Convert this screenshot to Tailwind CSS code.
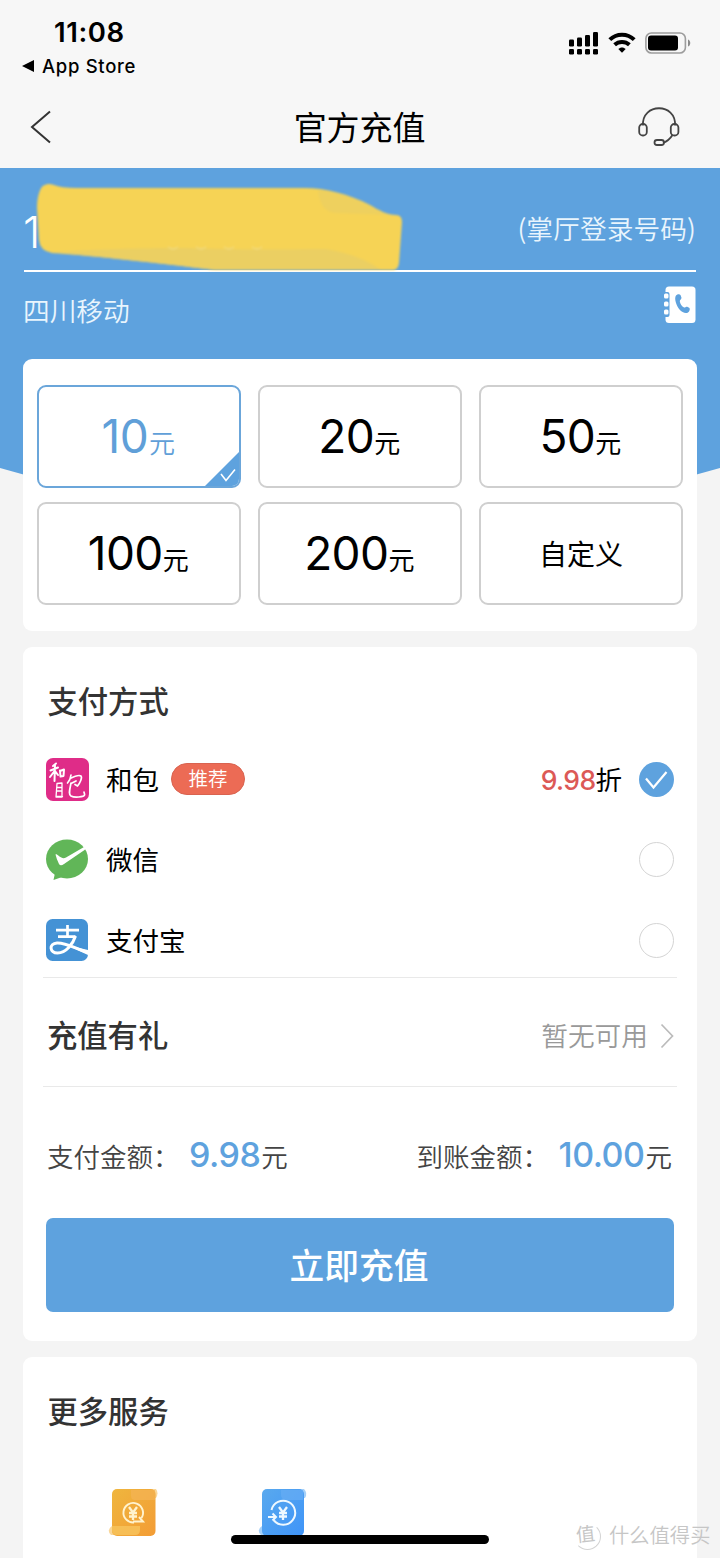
<!DOCTYPE html>
<html lang="zh-CN">
<head>
<meta charset="utf-8">
<title>官方充值</title>
<script src="https://cdn.jsdelivr.net/npm/@tailwindcss/browser@4"></script>
</head>
<body class="bg-[#f4f4f4]">
<div class="relative w-[720px] h-[1558px] overflow-hidden flex flex-col font-['Inter','Noto_Sans_CJK_SC',sans-serif] text-black">

  <!-- Status bar -->
  <header class="h-[168px] shrink-0 bg-[#f7f7f7] flex flex-col">
    <div class="h-[86px] flex justify-between pl-[22px] pr-[29px]">
      <div class="flex flex-col pt-[16px]">
        <div class="pl-[32px] h-8 leading-8 text-[27.500px] font-semibold tracking-[0.600px] whitespace-nowrap">11:08</div>
        <div class="mt-[6px] h-6 flex items-center gap-[8px] text-[18.500px] font-[450] tracking-[0.700px] leading-6 whitespace-nowrap">
          <svg class="w-3 h-3" viewBox="0 0 12 12"><path d="M0 6 12 0v12z"/></svg>
          <span>App Store</span>
        </div>
      </div>
      <div class="flex gap-[9px] pt-[32px]">
        <svg class="w-[30px] h-[23px]" viewBox="0 0 30 23">
          <rect x="0" y="7.500" width="5" height="7" rx="1.200"/><rect x="8" y="5.500" width="5" height="9" rx="1.200"/><rect x="16" y="3" width="5" height="11.500" rx="1.200"/><rect x="24" y="0" width="5" height="14.500" rx="1.200"/>
          <rect x="0" y="17" width="5" height="5.500" rx="1.200"/><rect x="8" y="17" width="5" height="5.500" rx="1.200"/><rect x="16" y="17" width="5" height="5.500" rx="1.200"/><rect x="24" y="17" width="5" height="5.500" rx="1.200"/>
        </svg>
        <svg class="w-[28px] h-[22px]" viewBox="0 0 28 22" fill="none" stroke="#000" stroke-width="4">
          <path d="M1.800 7.700C8.500 1 19.500 1 26.200 7.700"/><path d="M6.600 12.800C10.800 9 17.200 9 21.400 12.800"/><path d="M14 20.800l-3.700-3.700c2-2.100 5.400-2.100 7.400 0z" fill="#000" stroke="none"/>
        </svg>
        <svg class="w-[46px] h-[23px]" viewBox="0 0 46 23">
          <rect x="0.900" y="1" width="39.500" height="20" rx="5.500" fill="none" stroke="#9d9d9d" stroke-width="1.600"/>
          <rect x="3" y="3.500" width="30" height="15" rx="3"/>
          <path d="M43 7.500c3 1 3 6 0 7z" fill="#8a8a8a"/>
        </svg>
      </div>
    </div>
    <!-- Navigation -->
    <div class="h-[82px] flex items-center justify-between pl-[30px] pr-[40px]">
      <svg class="w-[22px] h-[34px]" viewBox="0 0 22 34" fill="none" stroke="#333" stroke-width="2"><path d="M20 1.500 2 17 20 32.500"/></svg>
      <h1 class="text-[33px] leading-[48px] tracking-[-0.100px] pl-[29px] pt-[2px]">官方充值</h1>
      <svg class="w-[42px] h-[42px]" viewBox="0 0 42 42" fill="none" stroke="#444" stroke-width="1.800">
        <path d="M5 19.500C3.500-3.500 38.500-3.500 37 19.500"/><rect x="1.200" y="18" width="7.600" height="11.500" rx="3.600"/><rect x="32.800" y="18" width="7.600" height="11.500" rx="3.600"/><path d="M34.500 29C32 33 29 35.500 25 37"/><rect x="16.500" y="34" width="9.500" height="5" rx="2.500"/>
      </svg>
    </div>
  </header>

  <main class="relative flex-1 px-[23px] flex flex-col">
    <div class="absolute inset-x-0 top-0 h-[324px] bg-[#5ea2de] [clip-path:polygon(0_0,100%_0,100%_300px,96.500%_307px,3.500%_307px,0_300px)]"></div>

    <!-- Phone number -->
    <section class="relative h-[191px] px-px flex flex-col shrink-0">
      <div class="h-[104px] border-b-[2.500px] border-white flex items-center justify-between pt-[19px]">
        <span class="text-[44px] leading-[60px] font-[350] text-white pt-[6px] -ml-px">1</span>
        <span class="text-[26.700px] leading-9 text-[#e9f5fd] font-['Noto_Sans_CJK_SC',sans-serif] font-[350] tracking-[0.100px] -mt-[2px]">(掌厅登录号码)</span>
      </div>
      <div class="flex justify-between h-[76px]">
        <span class="pt-[21px] text-[26.700px] leading-[36px] font-[350] text-[#e9f5fd] -ml-px">四川移动</span>
        <svg class="w-[33px] h-[38px] mt-[14px]" viewBox="0 0 33 38">
          <rect x="2.500" y="0.500" width="30" height="36.500" rx="3.500" fill="#fff"/>
          <path d="M0 6h4.500q2 0 2 2v21q0 2-2 2H0z" fill="#5ea2de"/>
          <rect x="1" y="7.500" width="4.500" height="5" rx="1.500" fill="#fff"/><rect x="1" y="15.500" width="4.500" height="5" rx="1.500" fill="#fff"/><rect x="1" y="23.500" width="4.500" height="5" rx="1.500" fill="#fff"/>
          <path d="M13 9.500c1.300-1.400 3.600-1.800 4.500-.5l1 2.800c.3 1.200-1.800 2.200-1.700 3.400.4 2.600 2 5 4.300 6.300 1 .4 2.200-1 3.500-.6l1.600.8c1.300 1 .4 3.700-1.200 4.700-2.500 1.500-6-.3-8.500-3-3-3.400-5.700-10.800-3.500-13.900z" fill="#5ea2de"/>
        </svg>
      </div>
      <svg class="absolute left-[13px] top-[15px] w-[368px] h-[87px] blur-[0.800px]" viewBox="0 0 368 87">
        <path d="M9 2C5 2 1 12 1 25L3 57Q4 68 16 70C60 73 120 80 180 87H355Q362 88 363 80L366 39Q366 32 360 32C352 32 342 27 334 22C312 11 290 5 268 5H40Q25 5 18 2Q12 0 9 2Z" fill="#f6d355"/>
        <path d="M16 69.500C60 66 100 65 150 65C200 67 250 66 290 66Q325 72 345 87L180 87C120 80 60 73 16 69.500Z" fill="#ebcf62"/>
        <path d="M282 7C305 10 322 16 340 27Q348 31 355 32L300 30Q284 29 282 7Z" fill="#eed05e"/>
        <path d="M132 64q5 4 10 0M160 64q5 4 10 0M188 64q5 4 10 0M216 64q5 4 10 0" fill="none" stroke="#f2df90" stroke-width="1"/>
      </svg>
    </section>

    <!-- Amounts -->
    <section class="relative h-[272px] shrink-0 bg-white rounded-[9px] px-[14px] pt-[26px]">
      <div class="grid grid-cols-3 gap-x-[17px] gap-y-[14px] text-[46px] tracking-[-0.600px] leading-[60px]">
        <div class="relative h-[103px] border-2 border-[#6ba6da] rounded-[9px] flex items-center justify-center text-[#609fd8] overflow-hidden">
          <div class="flex items-baseline pt-[7px] pr-[2px]"><span>10</span><span class="text-[26px] ml-px font-[350]">元</span></div>
          <svg class="absolute -right-px -bottom-px w-[36px] h-[36px]" viewBox="0 0 36 36"><path d="M36 0V36H0z" fill="#5ea2de"/><path d="M17 23l5 6.500 9-11" fill="none" stroke="#fff" stroke-width="1.600"/></svg>
        </div>
        <div class="h-[103px] border-2 border-[#cfcfcf] rounded-[9px] flex items-center justify-center"><div class="flex items-baseline pt-[7px] pr-[2px]"><span>20</span><span class="text-[26px]">元</span></div></div>
        <div class="h-[103px] border-2 border-[#cfcfcf] rounded-[9px] flex items-center justify-center"><div class="flex items-baseline pt-[7px] pr-[2px]"><span>50</span><span class="text-[26px]">元</span></div></div>
        <div class="h-[103px] border-2 border-[#cfcfcf] rounded-[9px] flex items-center justify-center"><div class="flex items-baseline pt-[7px] pr-[2px]"><span>100</span><span class="text-[26px]">元</span></div></div>
        <div class="h-[103px] border-2 border-[#cfcfcf] rounded-[9px] flex items-center justify-center"><div class="flex items-baseline pt-[7px] pr-[2px]"><span>200</span><span class="text-[26px]">元</span></div></div>
        <div class="h-[103px] border-2 border-[#cfcfcf] rounded-[9px] flex items-center justify-center"><span class="text-[28px] tracking-normal pt-[2px]">自定义</span></div>
      </div>
    </section>

    <!-- Payment -->
    <section class="relative mt-4 h-[694px] shrink-0 bg-white rounded-[9px] px-[20px] pt-[25px] flex flex-col">
      <h2 class="h-[60px] leading-[60px] text-[30.300px] font-medium text-[#333] pl-[4.500px]">支付方式</h2>
      <div class="mt-[26px] flex flex-col gap-[38.500px] pl-[3px] pr-[3px] text-[26.500px]">
        <div class="h-[42px] flex items-center">
          <svg class="w-[43px] h-[43px]" viewBox="0 0 43 43" fill="none" stroke="#fff" stroke-linecap="round" stroke-linejoin="round" stroke-width="1.700">
            <rect width="43" height="43" rx="7" fill="#df2c88" stroke="none"/>
            <path d="M10 5.500 7 8M4.500 12.500 12 9.500M9 6.500 8.500 23M8.500 13 4 19M9 13l3 4M14 12.500l.5 6M14 13l4-1.500-.5 6.500-3 .5" stroke-width="2"/>
            <path d="M25 17c-.5 4-2 6.500-3.500 8M24 20.500c4-2 9-4 11-2.500 1.500 1.500-1 7-3.500 10l-2.500-1.500M26 25l4-2M25 25c-1 6-3 11 0 13 3.500 2 13 1 13.500-1 .5-1-.5-2-.5-3"/>
            <path d="M11 25.500l5-.5v14H10zM11.500 29.500h3.500M11.500 33h3.500M10 38.500h6.500" stroke-width="1.300"/>
          </svg>
          <span class="ml-[17px] pt-[3px]">和包</span>
          <span class="ml-[12px] w-[74px] h-[32px] rounded-full border border-[#d96350] bg-[#ec6b55] text-white text-[19.500px] leading-[31px] text-center font-[350]">推荐</span>
          <span class="ml-auto flex items-baseline pt-[3px]"><span class="text-[#dc5956] font-medium tracking-[-0.600px]">9.98</span><span>折</span></span>
          <svg class="ml-[17px] w-[35px] h-[35px]" viewBox="0 0 35 35"><circle cx="17.500" cy="17.500" r="17.500" fill="#5ea2de"/><path d="M7 16.500 14.500 25.500 27.500 10" fill="none" stroke="#fff" stroke-width="2.200"/></svg>
        </div>
        <div class="h-[42px] flex items-center">
          <svg class="w-[43px] h-[43px]" viewBox="0 0 43 43">
            <ellipse cx="21" cy="21" rx="21" ry="19.500" fill="#61b658"/><path d="M9 35 7.500 42 19 38z" fill="#61b658"/>
            <path d="M9.500 16.500C11 15.500 13 19 16.500 20Q18 20.500 20 19.500L38 9Q41 9.500 38.500 12L18 26Q14.500 28.500 13 26Q10.500 21 9.500 16.500z" fill="#fff"/>
          </svg>
          <span class="ml-[17px] pt-[3px]">微信</span>
          <span class="ml-auto w-[35px] h-[35px] rounded-full border-[1.500px] border-[#d4d4d4]"></span>
        </div>
        <div class="h-[42px] flex items-center">
          <svg class="w-[43px] h-[43px]" viewBox="0 0 43 43" fill="none" stroke="#fff">
            <rect width="42" height="42" rx="6.500" fill="#4492d5" stroke="none"/>
            <path d="M10 11.200H33M21.500 6V17M12 17.700H29.500" stroke-width="2.700"/>
            <path d="M29.500 17C27 25 20 34 11.500 34C3.500 34 2.500 24.500 11 24C20 23.500 30 30 42 33.500" stroke-width="3"/>
            <path d="M27 27.500 42 31V36Q34 32.500 26 28.500z" fill="#fff" stroke="none"/>
          </svg>
          <span class="ml-[17px] pt-[3px]">支付宝</span>
          <span class="ml-auto w-[35px] h-[35px] rounded-full border-[1.500px] border-[#d4d4d4]"></span>
        </div>
      </div>
      <div class="mt-[16px] h-[110px] border-y border-[#e9e9e9] flex items-center pt-[8px] pl-[4px] pr-[3px]">
        <h2 class="text-[30.300px] leading-10 font-medium text-[#333]">充值有礼</h2>
        <span class="ml-auto text-[26.700px] leading-10 font-[350] text-[#999]">暂无可用</span>
        <svg class="ml-[12px] w-[14px] h-[26px] -mt-px" viewBox="0 0 14 26" fill="none" stroke="#bbb" stroke-width="1.700"><path d="M1.500 1.500 12.500 13 1.500 24.500"/></svg>
      </div>
      <div class="h-[131px] flex items-center justify-between pl-[4px] pr-[5px] pt-[7px] text-[26.500px] leading-10 text-[#444] whitespace-nowrap">
        <div class="flex items-baseline"><span class="w-[142px] font-[350]">支付金额：</span><span class="text-[34px] font-medium text-[#5ea2de] tracking-[-0.500px]">9.98</span><span class="ml-px font-[350]">元</span></div>
        <div class="flex items-baseline"><span class="w-[142px] font-[350]">到账金额：</span><span class="text-[34px] font-medium text-[#5ea2de] tracking-[-0.500px]">10.00</span><span class="ml-px font-[350]">元</span></div>
      </div>
      <button class="mx-[3px] h-[94px] shrink-0 rounded-[7px] bg-[#5ea2de] text-white text-[34.800px] font-medium pt-[3px] pr-[2px]">立即充值</button>
    </section>

    <!-- More services -->
    <section class="relative mt-4 flex-1 bg-white rounded-t-[9px] px-[20px] pt-[25px]">
      <h2 class="h-[60px] leading-[60px] text-[30.300px] font-medium text-[#333] pl-[4.500px]">更多服务</h2>
      <div class="mt-[46px] flex gap-[99px] pl-[64px]">
        <svg class="w-[51px] h-[49px]" viewBox="0 0 51 49">
          <defs><linearGradient id="a" x1="0" y1="0" x2="1" y2="1"><stop stop-color="#efb63e"/><stop offset="1" stop-color="#f39c35"/></linearGradient></defs>
          <path d="M30 1H49Q52 5 49 10H40z" fill="#f9d79a"/><path d="M5 38H20V47H4Q-1 42 5 38z" fill="#f9d79a"/>
          <rect x="5" y="1" width="43.500" height="47" rx="5" fill="url(#a)"/><path d="M24 2H48V12H28Q24 12 24 8z" fill="#f3b455" opacity=".7"/><path d="M5 38H33V42Q33 47 28 47H10Q5 47 5 42z" fill="#f7c45e" opacity=".8"/>
          <g fill="none" stroke="#fff3cf" stroke-width="1.900"><path d="M27 34.500A9.800 9.800 0 1 1 34.500 30M26 33.500H36L32 29"/><path d="M22 19l4 5.500L30 19M26 24v8M22 25h8M22 28.500h8" stroke-width="2.300"/></g>
        </svg>
        <svg class="w-[51px] h-[49px]" viewBox="0 0 51 49">
          <defs><linearGradient id="b" x1="0" y1="0" x2="1" y2="1"><stop stop-color="#59a9ee"/><stop offset="1" stop-color="#3f94f8"/></linearGradient></defs>
          <path d="M35 1H47Q51 5 48 10H40z" fill="#a5d0f8"/><path d="M5 38H15V47H4Q-1 42 5 38z" fill="#a5d0f8"/>
          <rect x="5" y="1" width="42" height="47" rx="5" fill="url(#b)"/><path d="M24 2H46V12H30Q24 12 24 7z" fill="#66acf4" opacity=".7"/>
          <g fill="none" stroke="#eef8ff" stroke-width="2"><path d="M14.500 22A12 12 0 1 1 17 32.500M11 29H19M15.500 25.500 19 29 15.500 32.500"/><path d="M22 19l4 5.500L30 19M26 24v8M22 25h8M22 28.500h8" stroke-width="2.300"/></g>
        </svg>
      </div>
    </section>
  </main>

  <!-- Home indicator and watermark -->
  <div class="absolute left-[231px] top-[1535px] w-[258px] h-[9px] rounded-full bg-black"></div>
  <div class="absolute left-[574px] top-[1520px] h-[32px] flex items-center gap-[8px] text-[#c6c6c6] whitespace-nowrap">
    <span class="w-[27px] h-[27px] rounded-full border border-[#d4d4d4] border-l-transparent border-t-transparent flex items-center justify-center text-[19px] leading-[26px]"><span class="-ml-[3px] -mt-[3px] -rotate-6">值</span></span>
    <span class="text-[20.300px] leading-8 font-[350]">什么值得买</span>
  </div>
</div>
</body>
</html>
